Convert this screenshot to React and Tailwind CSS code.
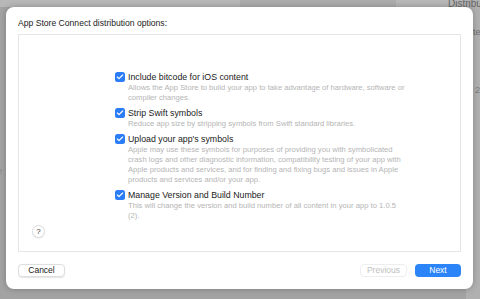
import { Check } from "lucide-react";

const options = [
  {
    label: "Include bitcode for iOS content",
    lines: [
      "Allows the App Store to build your app to take advantage of hardware, software or",
      "compiler changes.",
    ],
  },
  {
    label: "Strip Swift symbols",
    lines: ["Reduce app size by stripping symbols from Swift standard libraries."],
  },
  {
    label: "Upload your app's symbols",
    lines: [
      "Apple may use these symbols for purposes of providing you with symbolicated",
      "crash logs and other diagnostic information, compatibility testing of your app with",
      "Apple products and services, and for finding and fixing bugs and issues in Apple",
      "products and services and/or your app.",
    ],
  },
  {
    label: "Manage Version and Build Number",
    lines: [
      "This will change the version and build number of all content in your app to 1.0.5",
      "(2).",
    ],
  },
];

const Option = ({ label, lines }) => (
  <div className="flex gap-[3px]">
    <div className="mt-[1px] w-[10px] h-[10px] rounded-[2.5px] bg-[#2b7cf7] flex items-center justify-center shrink-0">
      <Check size={8} strokeWidth={3.5} className="text-white" />
    </div>
    <div className="flex flex-col">
      <span className="text-[8.8px] leading-[12px] text-[#222]">{label}</span>
      <p className="text-[7.65px] leading-[10px] text-[#b5b5b5] whitespace-nowrap">
        {lines.map((l) => (
          <span key={l} className="block">{l}</span>
        ))}
      </p>
    </div>
  </div>
);

const App = () => {
  return (
    <div
      className="relative w-[480px] h-[299px] overflow-hidden bg-[#a3a3a3]"
      style={{ fontFamily: "'Liberation Sans', Arial, sans-serif" }}
    >
      {/* blurred window behind the sheet */}
      <div className="absolute left-0 top-0 w-[480px] h-[7px] bg-[#b8b8b8]" />
      <div className="absolute left-[240px] top-0 w-[156px] h-[7px] bg-[#adadad]" />
      <div className="absolute right-0 top-0 w-[14px] h-[299px] bg-[#b0b0b0]" />
      <span className="absolute left-[448px] top-[-1px] text-[10px] leading-[10px] text-[#666] whitespace-nowrap">Distribut</span>
      <span className="absolute left-[473px] top-[26px] text-[9px] text-[#6e6e6e]">te</span>
      <span className="absolute left-[475px] top-[84px] text-[9px] text-[#7a7a7a]">2</span>
      <span className="absolute left-[-3px] top-[165px] text-[9px] text-[#8a8a8a]">e</span>

      <div className="relative ml-[6px] mt-[7px] w-[467px] h-[282px] rounded-[8px] bg-white shadow-[0_0_6px_rgba(0,0,0,0.25)] flex flex-col px-[12px] pt-[10px]">
        <h1 className="text-[8.6px] leading-[12px] text-[#222] mb-[5px]">App Store Connect distribution options:</h1>

        <div className="h-[218px] border border-[#e6e6e6] flex flex-col">
          <div className="flex flex-col gap-[4px] pl-[96px] pt-[36px]">
            {options.map((o) => (
              <Option key={o.label} {...o} />
            ))}
          </div>
          <div className="mt-auto mb-[13px] ml-[13px] w-[13px] h-[13px] rounded-full border border-[#dcdcdc] shadow-[0_0.5px_1px_rgba(0,0,0,0.15)] flex items-center justify-center text-[8px] text-[#333]">
            ?
          </div>
        </div>

        <div className="flex items-center mt-[12px]">
          <button className="w-[47px] h-[13px] rounded-[4px] border border-[#dedede] shadow-[0_0.5px_1px_rgba(0,0,0,0.1)] text-[8.5px] leading-[11px] text-[#222]">
            Cancel
          </button>
          <div className="ml-auto flex gap-[8px]">
            <button className="w-[47px] h-[13px] rounded-[4px] border border-[#eeeeee] text-[8.5px] leading-[11px] text-[#c0c0c0]">
              Previous
            </button>
            <button className="w-[46px] h-[13px] rounded-[4px] bg-[#2b85f8] text-[8.5px] leading-[13px] font-medium text-white">
              Next
            </button>
          </div>
        </div>
      </div>
    </div>
  );
};

export default App;
